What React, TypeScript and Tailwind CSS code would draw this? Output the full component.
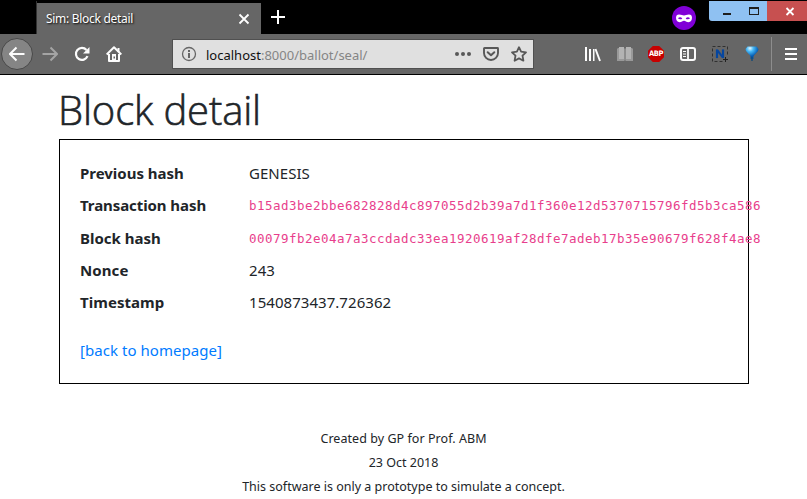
import React from "react";

const rows = [
  { label: "Previous hash", value: "GENESIS", code: false, h: "h-8", ls: "tracking-[-0.02px]", vls: "tracking-[0.05px]" },
  { label: "Transaction hash", value: "b15ad3be2bbe682828d4c897055d2b39a7d1f360e12d5370715796fd5b3ca586", code: true, h: "h-[33px]", ls: "tracking-[-0.08px]", vls: "" },
  { label: "Block hash", value: "00079fb2e04a7a3ccdadc33ea1920619af28dfe7adeb17b35e90679f628f4ae8", code: true, h: "h-[32px]", ls: "tracking-[0px]", vls: "" },
  { label: "Nonce", value: "243", code: false, h: "h-8", ls: "tracking-[0.1px]", vls: "tracking-[0.1px]" },
  { label: "Timestamp", value: "1540873437.726362", code: false, h: "h-[48px]", ls: "tracking-[0.05px]", vls: "tracking-[0.05px]" },
];

function Icon({ children, className = "" }: { children: React.ReactNode; className?: string }) {
  return (
    <svg viewBox="0 0 16 16" className={"h-4 w-4 shrink-0 " + className} fill="none" stroke="currentColor" strokeWidth="2">
      {children}
    </svg>
  );
}

function TabBar() {
  return (
    <div className="flex h-[34px] items-start bg-black">
      <div className="ml-[36px] mt-[1px] h-[33px] w-px bg-[#333]" />
      <div className="mt-[3px] flex h-[31px] w-[224px] items-center bg-[#666] pl-[9px] pr-[11px] text-white">
        <span className="mt-px grow whitespace-nowrap text-[12px] tracking-[-0.3px] [text-shadow:1px_1px_2px_#000]">Sim: Block detail</span>
        <svg viewBox="0 0 12 12" className="h-3 w-3" stroke="white" strokeWidth="1.800"><path d="M1.500 1.500l9 9M10.500 1.500l-9 9" /></svg>
      </div>
      <svg viewBox="0 0 14 14" className="ml-[10px] mt-[10px] h-[14px] w-[14px]" stroke="white" strokeWidth="2"><path d="M0 7h14M7 0v14" /></svg>
      <svg viewBox="0 0 24 24" className="ml-[387px] mt-[6px] h-6 w-6">
        <circle cx="12" cy="12" r="12" fill="#8000d7" />
        <path fillRule="evenodd" fill="white" d="M7 8.500c2.500 0 3.500 1 5 1s2.500-1 5-1c2 0 3 1.200 3 3.300 0 2.700-1.500 4.400-3.500 4.400-2.200 0-3-1.500-4.500-1.500s-2.300 1.500-4.500 1.500c-2 0-3.500-1.700-3.500-4.400 0-2.100 1-3.300 3-3.300zM6 12.300c1 1.400 3.300 1.300 4.300.1-1.200-1.500-3.200-1.500-4.300-.1zm7.700.1c1 1.200 3.300 1.300 4.300-.1-1.100-1.400-3.100-1.400-4.300.1z" />
      </svg>
      <div className="ml-[13px] mt-px flex h-5 w-[98px] overflow-hidden rounded-bl-[3px]">
        <svg viewBox="0 0 58 20" className="h-5 w-[58px] bg-[#8fc1f2]" shapeRendering="crispEdges">
          <path d="M14 12h8v2h-8z" fill="#1e1e1e" />
          <path fillRule="evenodd" d="M40 6h10v8H40zM41 8v5h8V8z" fill="#1e1e1e" />
        </svg>
        <svg viewBox="0 0 40 20" className="h-5 w-10 bg-[#c75050]" stroke="white" strokeWidth="1.800"><path d="M19.500 7l7 7M26.500 7l-7 7" /></svg>
      </div>
    </div>
  );
}

function Toolbar() {
  return (
    <div className="flex h-[41px] items-center border-b border-black bg-[#666] text-[#fcfcfc]">
      <div className="ml-[0.5px] flex h-8 w-8 shrink-0 items-center justify-center rounded-full border border-[#484848] bg-[#858585]">
        <Icon><path d="M15.500 8H1.500M7.500 1.500L1 8l6.500 6.500" /></Icon>
      </div>
      <Icon className="ml-[9.5px] text-[#a4a4a4]"><path d="M.5 8h14M8.500 1.500L15 8l-6.500 6.500" /></Icon>
      <Icon className="ml-4">
        <path d="M13.500 10.200A6 6 0 1 1 12.500 4" strokeWidth="2.200" /><path d="M15.500 1v6.500H9z" fill="currentColor" stroke="none" />
      </Icon>
      <Icon className="ml-4">
        <path d="M.7 8.500L8 1.300l7.300 7.200M3 8v7h10V8" strokeLinejoin="round" /><path d="M6 8h4v7H6z" fill="currentColor" stroke="none" /><path d="M7.500 10.500h1.500v2H7.500z" fill="#666" stroke="none" /><path d="M12.500 2v4" />
      </Icon>
      <div className="ml-[50px] flex h-[30px] w-[362px] shrink-0 items-center border border-[#505050] bg-[#e0e0e0] text-[#585858]">
        <svg viewBox="0 0 16 16" className="ml-[8px] h-4 w-4 shrink-0" fill="none" stroke="#666"><circle cx="8" cy="8" r="6.500" strokeWidth="1.300" /><path d="M8 7v5M8 4v2" strokeWidth="2" /></svg>
        <span className="ml-[9px] mt-[3px] grow whitespace-nowrap text-[13px] text-[#858585]"><span className="text-[#101010]">localhost</span>:8000/ballot/seal/</span>
        <svg viewBox="0 0 16 4" className="h-1 w-4 shrink-0" fill="currentColor"><circle cx="2" cy="2" r="2" /><circle cx="8" cy="2" r="2" /><circle cx="14" cy="2" r="2" /></svg>
        <Icon className="ml-3"><path d="M1 2.500q0-.5.500-.5h13q.5 0 .5.500V7a7 7 0 0 1-14 0z" strokeWidth="1.900" /><path d="M4.700 6.200L8 9.300l3.300-3.100" strokeWidth="2" strokeLinecap="round" strokeLinejoin="round" /></Icon>
        <Icon className="ml-3 mr-[6px]"><path d="M8 1.200l2.100 4.400 4.900.7-3.500 3.400.9 5L8 12.400l-4.400 2.300.9-5L1 6.300l4.900-.7z" strokeWidth="1.800" strokeLinejoin="round" /></Icon>
      </div>
      <Icon className="ml-[51px]"><path d="M1 1h2v14H1zM5 3h2v12H5zM9 3h1.500v12H9z" fill="currentColor" stroke="none" transform="translate(-1 0)" /><path d="M10.500 3l4.500 12" strokeWidth="1.900" /></Icon>
      <Icon className="ml-4"><path d="M0 3l1-1h5.500L8 3l1.500-1H15l1 1v12H9l-1-1-1 1H0z" fill="#999" stroke="none" /><path d="M2 1h5v12H2zM9 1h5v12H9z" fill="#b3b3b3" stroke="none" /><path d="M8 2v12" stroke="#808080" strokeWidth="1" /></Icon>
      <div className="ml-[15px] flex h-4 w-4 shrink-0 items-center justify-center bg-[#c70000] font-['DejaVu_Sans_Condensed','DejaVu_Sans',sans-serif] text-[7.500px] font-bold leading-none tracking-[-0.5px] text-white [clip-path:polygon(30%_0,70%_0,100%_30%,100%_70%,70%_100%,30%_100%,0_70%,0_30%)]">ABP</div>
      <Icon className="ml-4"><rect x="1" y="2" width="14" height="12" rx="2" /><path d="M8 2v12" strokeWidth="1.800" /><path d="M3 5.500h3M3 8h3M3 10.500h3" strokeWidth="1" /></Icon>
      <Icon className="ml-4"><path d="M10.500 15.500H.5V.5h15v10" stroke="#303030" strokeWidth="1" strokeDasharray="3 2" /><path d="M4 12V3.500h2l4 5.200V3.500h2V12h-2L6 6.800V12z" fill="#0646a0" stroke="#0646a0" strokeWidth=".2" /><path d="M11 13.500h5M13.500 11v5" stroke="#202020" strokeWidth="1" /></Icon>
      <svg viewBox="0 0 16 16" className="ml-4 h-4 w-4 shrink-0">
        <defs><radialGradient id="pin" cx=".35" cy=".15" r=".65"><stop offset="0" stopColor="#e2f7ff" /><stop offset=".4" stopColor="#48b8f5" /><stop offset="1" stopColor="#0058b0" /></radialGradient></defs>
        <path d="M3.500.5h9L14.500 3l-.5 2L9.500 10v3h-3v-3L2 5 1.500 3z" fill="url(#pin)" /><path d="M8 11v4" stroke="#174d78" strokeWidth="1.500" />
      </svg>
      <div className="ml-[11px] h-[34px] w-px bg-[#8d8d8d]" />
      <svg viewBox="0 0 12 12" className="ml-[13px] h-3 w-3 shrink-0" fill="white" shapeRendering="crispEdges"><path d="M0 0h12v2H0zM0 5h12v2H0zM0 10h12v2H0z" /></svg>
    </div>
  );
}

export default function App() {
  return (
    <div className="h-[499px] w-[807px] overflow-hidden bg-white font-['Noto_Sans','Open_Sans',sans-serif] text-[#212529]">
      <TabBar />
      <Toolbar />
      <main className="pl-[58px] pt-2">
        <h1 className="h-[56px] whitespace-nowrap font-['Open_Sans','Noto_Sans',sans-serif] text-[40px] font-light leading-[54px] tracking-[-0.15px] [-webkit-text-stroke:0.6px_#212529]">Block detail</h1>
        <section className="ml-px h-[245px] w-[690px] border border-black pl-5 pt-[21px] leading-6">
          {rows.map((r) => (
            <div key={r.label} className={"flex text-[15px] " + r.h}>
              <div className={"w-[169px] shrink-0 whitespace-nowrap font-bold " + r.ls}>{r.label}</div>
              {r.code ? (
                <code className="mt-px whitespace-nowrap font-['DejaVu_Sans_Mono',monospace] text-[12.500px] tracking-[0.475px] text-[#e83e8c]">{r.value}</code>
              ) : (
                <div className={"whitespace-nowrap " + r.vls}>{r.value}</div>
              )}
            </div>
          ))}
          <a className="text-[15px] tracking-[0.05px] text-[#007bff]">[back to homepage]</a>
        </section>
      </main>
      <footer className="mt-[43px] text-center text-[12.500px] leading-6">
        <p className="tracking-[0.05px]">Created by GP for Prof. ABM</p>
        <p>23 Oct 2018</p>
        <p>This software is only a prototype to simulate a concept.</p>
      </footer>
    </div>
  );
}
